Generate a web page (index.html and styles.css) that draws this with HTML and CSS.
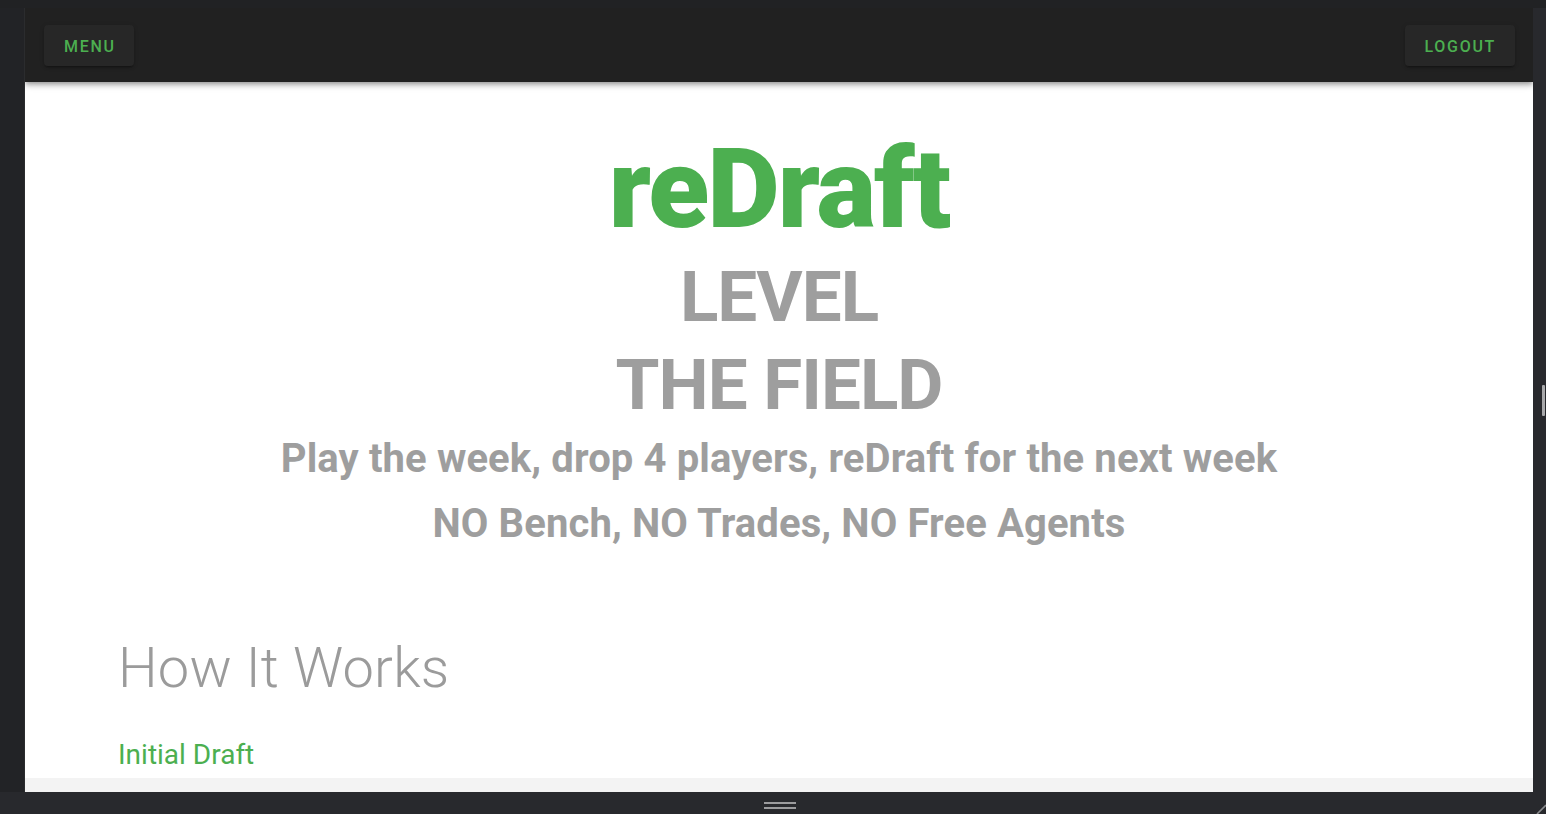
FILE: index.html
```
<!DOCTYPE html>
<html lang="en">
<head>
<meta charset="utf-8">
<title>reDraft</title>
<link rel="stylesheet" href="styles.css">
</head>
<body>
<div class="frame">
  <div class="top-strip"></div>
  <div class="middle">
    <div class="left-gutter"></div>
    <div class="viewport">
      <header class="appbar">
        <button class="btn">Menu</button>
        <button class="btn">Logout</button>
      </header>
      <main class="content">
        <section class="hero">
          <h1 class="brand">reDraft</h1>
          <h2 class="tagline">LEVEL<br>THE FIELD</h2>
          <p class="sub">Play the week, drop 4 players, reDraft for the next week</p>
          <p class="sub">NO Bench, NO Trades, NO Free Agents</p>
        </section>
        <section class="how">
          <h3 class="how-title">How It Works</h3>
          <h4 class="step-title">Initial Draft</h4>
        </section>
      </main>
      <div class="hscroll"></div>
    </div>
    <div class="right-gutter"><span class="thumb"></span></div>
  </div>
  <div class="bottom-bar">
    <span></span>
    <span class="handle"><i></i><i></i></span>
    <svg class="corner" width="10" height="10" viewBox="0 0 10 10"><line x1="1" y1="10" x2="10" y2="1" stroke="#8a8b8e" stroke-width="1.6"/></svg>
  </div>
</div>
</body>
</html>
```
FILE: styles.css
```
* { box-sizing: border-box; }
html, body { margin: 0; padding: 0; }
body {
  background: #28292d;
  font-family: Roboto, "Noto Sans", "Liberation Sans", sans-serif;
  width: 1546px;
  height: 814px;
  overflow: hidden;
}
.frame {
  display: flex;
  flex-direction: column;
  width: 1546px;
  height: 814px;
}
.top-strip {
  height: 8px;
  background: #212224;
  flex: none;
}
.middle {
  display: flex;
  height: 784px;
  flex: none;
}
.left-gutter {
  width: 25px;
  background: #222326;
  border-right: 1px solid #2b2c2e;
  flex: none;
}
.viewport {
  width: 1508px;
  display: flex;
  flex-direction: column;
  background: #fff;
  flex: none;
  overflow: hidden;
}
.right-gutter {
  width: 13px;
  flex: none;
  background: #28292d;
  display: flex;
  align-items: center;
  justify-content: flex-end;
  padding-right: 1px;
}
.thumb {
  width: 3px;
  height: 31px;
  background: #a9a9ab;
  border-radius: 1px;
}
.appbar {
  height: 74px;
  flex: none;
  background: #212121;
  display: flex;
  align-items: center;
  justify-content: space-between;
  padding: 1px 18px 0 19px;
  box-shadow: 0 2px 4px -1px rgba(0,0,0,.25), 0 4px 5px 0 rgba(0,0,0,.16), 0 1px 10px 0 rgba(0,0,0,.12);
  position: relative;
  z-index: 1;
}
.btn {
  height: 41px;
  border: none;
  border-radius: 4px;
  background: #272727;
  color: #4caf50;
  font-family: Roboto, "Noto Sans", sans-serif;
  font-weight: 500;
  font-size: 16px;
  letter-spacing: 1.7px;
  text-transform: uppercase;
  padding: 1px 19px 0 20px;
  box-shadow: 0 3px 1px -2px rgba(0,0,0,.2), 0 2px 2px 0 rgba(0,0,0,.14), 0 1px 5px 0 rgba(0,0,0,.12);
}
.btn:first-child {
  padding: 1px 18px 0 20px;
}
.content {
  flex: 1;
  overflow: hidden;
  padding-top: 51px;
}
.hero {
  text-align: center;
}
.brand {
  margin: 0;
  font-size: 112px;
  line-height: 112px;
  font-weight: 900;
  color: #4caf50;
  letter-spacing: -2px;
}
.tagline {
  margin: 8px 0 0;
  font-size: 71px;
  line-height: 88px;
  font-weight: 700;
  color: #9e9e9e;
  letter-spacing: -1px;
}
.sub {
  margin: -1px 0 0;
  font-size: 40px;
  line-height: 62px;
  font-weight: 700;
  color: #9e9e9e;
  letter-spacing: 0.12px;
}
.sub + .sub {
  margin-top: 3px;
}
.how {
  padding: 0 93px;
  margin-top: 80px;
}
.how-title {
  margin: 0;
  font-size: 56px;
  line-height: 1.2;
  font-weight: 300;
  color: #9b9b9b;
  letter-spacing: 0.2px;
}
.step-title {
  margin: 35px 0 0;
  font-size: 28px;
  line-height: 36px;
  font-weight: 400;
  color: #4caf50;
}
.hscroll {
  height: 14px;
  flex: none;
  background: #f3f3f3;
}
.bottom-bar {
  height: 22px;
  flex: none;
  background: #28292d;
  display: grid;
  grid-template-columns: 1fr auto 1fr;
}
.handle {
  display: flex;
  flex-direction: column;
  gap: 3px;
  padding-top: 10px;
  margin-left: 14px;
}
.handle i {
  display: block;
  width: 32px;
  height: 2px;
  background: #9c9c9e;
}
.corner {
  justify-self: end;
  align-self: end;
}
```
